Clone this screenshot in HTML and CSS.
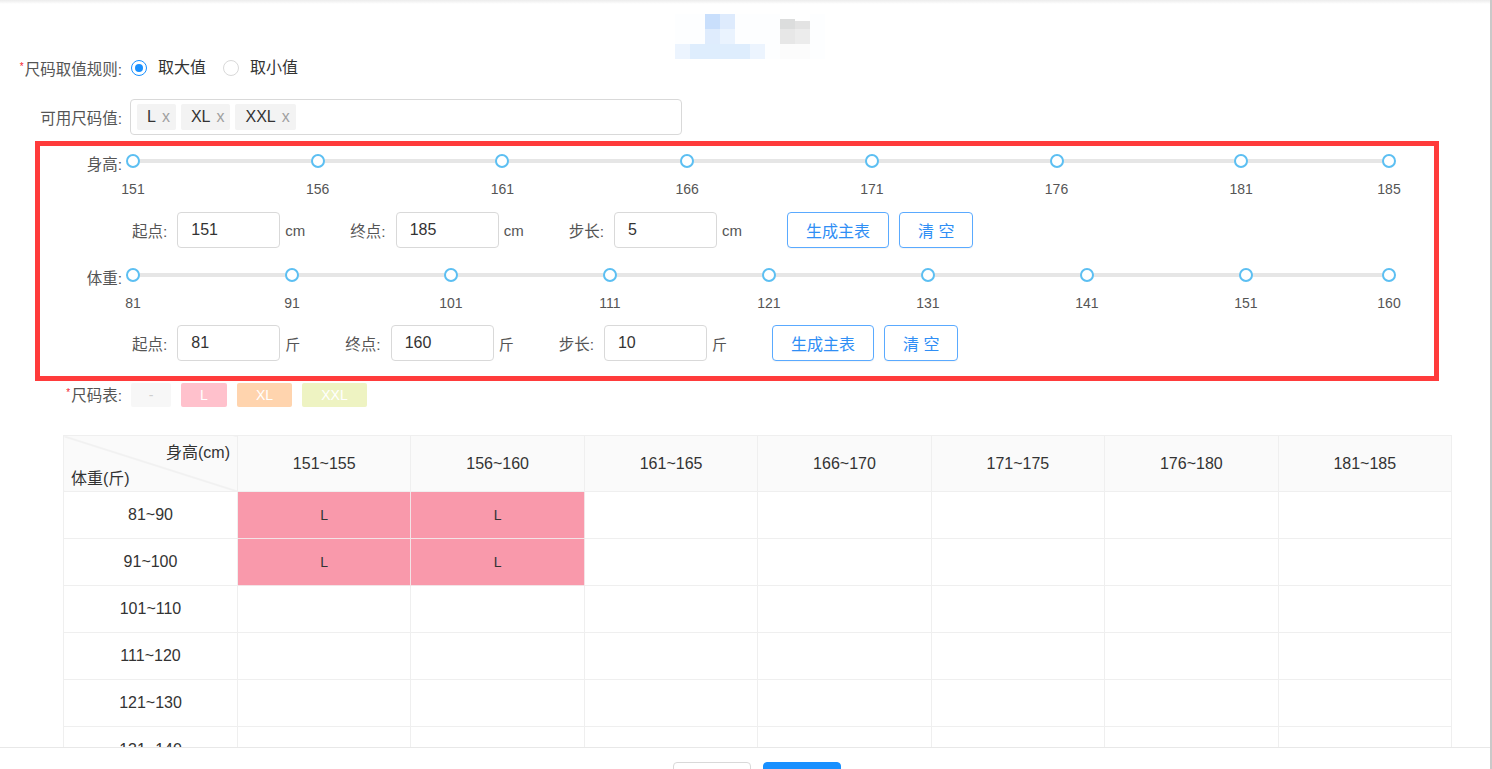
FILE: index.html
```html
<!DOCTYPE html>
<html lang="zh-CN">
<head>
<meta charset="utf-8">
<title>尺码表</title>
<link rel="stylesheet" href="styles.css">
</head>
<body>
<div class="modal">
  <div class="modal-body">
    <div class="shade"></div>
    <div class="title">
      <div class="mosaic">
        <i></i><i></i><i class="b1"></i><i class="b2"></i><i></i><i></i><i></i><i class="g1"></i><i class="g2"></i><i></i>
        <i></i><i></i><i class="b3"></i><i class="b4"></i><i></i><i></i><i></i><i class="g3"></i><i class="g4"></i><i></i>
        <i class="b5"></i><i class="b6"></i><i class="b6"></i><i class="b6"></i><i class="b6"></i><i class="b5"></i><i></i><i class="w"></i><i class="w"></i><i></i>
      </div>
    </div>

    <div class="form-row rule-row">
      <div class="form-label"><span class="req">*</span>尺码取值规则:</div>
      <label class="radio checked"><span class="radio-dot"></span><span class="radio-text">取大值</span></label>
      <label class="radio"><span class="radio-dot"></span><span class="radio-text">取小值</span></label>
    </div>

    <div class="form-row sizes-row">
      <div class="form-label">可用尺码值:</div>
      <div class="select">
        <span class="tag">L<span class="tag-x">x</span></span>
        <span class="tag">XL<span class="tag-x">x</span></span>
        <span class="tag">XXL<span class="tag-x">x</span></span>
      </div>
    </div>

    <div class="range-box">
      <div class="slider-row">
        <div class="slider-label">身高:</div>
        <div class="slider">
          <div class="rail"></div>
          <div class="marks">
            <span class="handle" style="left:0%"></span><span class="mark" style="left:0%">151</span>
            <span class="handle" style="left:14.706%"></span><span class="mark" style="left:14.706%">156</span>
            <span class="handle" style="left:29.412%"></span><span class="mark" style="left:29.412%">161</span>
            <span class="handle" style="left:44.118%"></span><span class="mark" style="left:44.118%">166</span>
            <span class="handle" style="left:58.824%"></span><span class="mark" style="left:58.824%">171</span>
            <span class="handle" style="left:73.529%"></span><span class="mark" style="left:73.529%">176</span>
            <span class="handle" style="left:88.235%"></span><span class="mark" style="left:88.235%">181</span>
            <span class="handle" style="left:100%"></span><span class="mark" style="left:100%">185</span>
          </div>
        </div>
      </div>
      <div class="field-row first-fields">
        <span class="f-label">起点:</span><span class="input">151</span><span class="unit">cm</span>
        <span class="f-label">终点:</span><span class="input">185</span><span class="unit">cm</span>
        <span class="f-label">步长:</span><span class="input">5</span><span class="unit">cm</span>
        <button class="btn">生成主表</button><button class="btn">清 空</button>
      </div>
      <div class="slider-row second-slider">
        <div class="slider-label">体重:</div>
        <div class="slider">
          <div class="rail"></div>
          <div class="marks">
            <span class="handle" style="left:0%"></span><span class="mark" style="left:0%">81</span>
            <span class="handle" style="left:12.658%"></span><span class="mark" style="left:12.658%">91</span>
            <span class="handle" style="left:25.316%"></span><span class="mark" style="left:25.316%">101</span>
            <span class="handle" style="left:37.975%"></span><span class="mark" style="left:37.975%">111</span>
            <span class="handle" style="left:50.633%"></span><span class="mark" style="left:50.633%">121</span>
            <span class="handle" style="left:63.291%"></span><span class="mark" style="left:63.291%">131</span>
            <span class="handle" style="left:75.949%"></span><span class="mark" style="left:75.949%">141</span>
            <span class="handle" style="left:88.608%"></span><span class="mark" style="left:88.608%">151</span>
            <span class="handle" style="left:100%"></span><span class="mark" style="left:100%">160</span>
          </div>
        </div>
      </div>
      <div class="field-row second-fields">
        <span class="f-label">起点:</span><span class="input">81</span><span class="unit">斤</span>
        <span class="f-label">终点:</span><span class="input">160</span><span class="unit">斤</span>
        <span class="f-label">步长:</span><span class="input">10</span><span class="unit">斤</span>
        <button class="btn">生成主表</button><button class="btn">清 空</button>
      </div>
    </div>

    <div class="form-row chips-row">
      <div class="form-label"><span class="req">*</span>尺码表:</div>
      <span class="chip chip-none">-</span>
      <span class="chip chip-l">L</span>
      <span class="chip chip-xl">XL</span>
      <span class="chip chip-xxl">XXL</span>
    </div>

    <table class="size-table">
      <colgroup><col class="c0"><col><col><col><col><col><col><col></colgroup>
      <thead>
        <tr>
          <th class="corner"><span class="corner-top">身高(cm)</span><span class="corner-bottom">体重(斤)</span></th>
          <th>151~155</th><th>156~160</th><th>161~165</th><th>166~170</th><th>171~175</th><th>176~180</th><th>181~185</th>
        </tr>
      </thead>
      <tbody>
        <tr><td class="rh">81~90</td><td class="pink">L</td><td class="pink">L</td><td></td><td></td><td></td><td></td><td></td></tr>
        <tr><td class="rh">91~100</td><td class="pink">L</td><td class="pink">L</td><td></td><td></td><td></td><td></td><td></td></tr>
        <tr><td class="rh">101~110</td><td></td><td></td><td></td><td></td><td></td><td></td><td></td></tr>
        <tr><td class="rh">111~120</td><td></td><td></td><td></td><td></td><td></td><td></td><td></td></tr>
        <tr><td class="rh">121~130</td><td></td><td></td><td></td><td></td><td></td><td></td><td></td></tr>
        <tr><td class="rh">131~140</td><td></td><td></td><td></td><td></td><td></td><td></td><td></td></tr>
      </tbody>
    </table>
  </div>
  <div class="modal-footer">
    <button class="fbtn">取 消</button>
    <button class="fbtn primary">确 定</button>
  </div>
</div>
</body>
</html>
```

FILE: styles.css
```css
html, body {
  margin: 0;
  padding: 0;
  background: #fff;
}
body {
  font-family: "Liberation Sans", "Noto Sans CJK SC", sans-serif;
  color: #333;
}
.modal {
  width: 1492px;
  height: 769px;
  box-sizing: border-box;
  border-right: 2px solid #c9c9c9;
  display: flex;
  flex-direction: column;
  overflow: hidden;
}
.modal-body {
  height: 747px;
  flex: none;
  overflow: hidden;
}
.shade {
  height: 4px;
  background: linear-gradient(#ececec, #fff);
}
.title {
  height: 55px;
  padding-top: 10px;
  box-sizing: border-box;
}
.mosaic {
  margin-left: 675px;
  width: 150px;
  display: grid;
  grid-template-columns: repeat(10, 15px);
  grid-auto-rows: 15px;
}
.mosaic i { display: block; background: #fdfeff; }
.mosaic .b1 { background: #c9dffc; }
.mosaic .b2 { background: #deebfd; }
.mosaic .b3 { background: #dfecfd; }
.mosaic .b4 { background: #eaf3fe; }
.mosaic .b5 { background: #ecf4fe; }
.mosaic .b6 { background: #deedfd; }
.mosaic .g1 { background: linear-gradient(#fff 0 5px, #dcdddd 5px); }
.mosaic .g2 { background: linear-gradient(#fff 0 7px, #e3e3e3 7px); }
.mosaic .g3 { background: #e7e7e7; }
.mosaic .g4 { background: #ececec; }
.mosaic .w { background: #fcfcfc; }

.form-row {
  display: flex;
  align-items: center;
}
.form-label {
  width: 130px;
  flex: none;
  box-sizing: border-box;
  padding-right: 8px;
  text-align: right;
  font-size: 15.5px;
  color: #555;
  white-space: nowrap;
}
.req {
  color: #f5222d;
  font-size: 10px;
  vertical-align: 5px;
  margin-right: 1px;
}
.rule-row { height: 16px; margin-top: 1px; }
.radio {
  display: flex;
  align-items: center;
  margin-left: 1px;
  margin-right: 16px;
  font-size: 16px;
  color: #333;
}
.radio-dot {
  width: 16px;
  height: 16px;
  box-sizing: border-box;
  border: 1px solid #d9d9d9;
  border-radius: 50%;
  position: relative;
  margin-right: 11px;
}
.radio.checked .radio-dot { border-color: #1890ff; }
.radio.checked .radio-dot::after {
  content: "";
  position: absolute;
  left: 3px;
  top: 3px;
  width: 8px;
  height: 8px;
  border-radius: 50%;
  background: #1890ff;
}
.radio-text { line-height: 16px; }

.sizes-row { margin-top: 23px; }
.select {
  width: 552px;
  height: 36px;
  box-sizing: border-box;
  border: 1px solid #d9d9d9;
  border-radius: 4px;
  padding: 4px 6px;
  display: flex;
  gap: 5px;
}
.tag {
  height: 26px;
  line-height: 26px;
  padding: 0 6px 0 10px;
  background: #f3f3f3;
  border-radius: 2px;
  font-size: 16px;
  color: #333;
}
.tag-x {
  margin-left: 6px;
  font-size: 16px;
  color: #a0a0a0;
}

.range-box {
  margin-top: 6px;
  margin-left: 35px;
  width: 1404px;
  height: 240px;
  box-sizing: border-box;
  border: 5px solid #ff3b3b;
  padding-top: 8px;
}
.slider-row {
  display: flex;
  height: 43px;
}
.second-slider { margin-top: 20px; }
.slider-label {
  width: 86px;
  flex: none;
  box-sizing: border-box;
  padding-right: 4px;
  text-align: right;
  font-size: 15.5px;
  line-height: 16px;
  margin-top: 3px;
  color: #555;
  white-space: nowrap;
}
.slider {
  position: relative;
  width: 1270px;
  flex: none;
}
.rail {
  position: absolute;
  left: 7px;
  right: 7px;
  top: 5px;
  height: 4px;
  border-radius: 2px;
  background: #e6e6e6;
}
.marks {
  position: absolute;
  left: 7px;
  right: 7px;
  top: 0;
  bottom: 0;
}
.handle {
  position: absolute;
  top: 0;
  width: 14px;
  height: 14px;
  margin-left: -7px;
  box-sizing: border-box;
  border: 2px solid #5cbff2;
  border-radius: 50%;
  background: #fff;
}
.mark {
  position: absolute;
  top: 27px;
  transform: translateX(-50%);
  font-size: 14px;
  line-height: 16px;
  color: #555;
}

.field-row {
  display: flex;
  align-items: center;
  padding-left: 92px;
  height: 36px;
}
.first-fields { margin-top: 15px; }
.second-fields { margin-top: 14px; }
.f-label {
  font-size: 15.5px;
  color: #555;
  margin-right: 10px;
  white-space: nowrap;
}
.input {
  width: 103px;
  height: 36px;
  box-sizing: border-box;
  border: 1px solid #d9d9d9;
  border-radius: 4px;
  padding: 0 13px;
  line-height: 34px;
  font-size: 16px;
  color: #333;
}
.unit {
  margin-left: 5px;
  margin-right: 45px;
  font-size: 15px;
  color: #555;
}
.btn {
  height: 36px;
  padding: 0 18px;
  border: 1px solid #5aaaff;
  border-radius: 4px;
  background: #fff;
  color: #2f8ef5;
  font-family: "Liberation Sans", "Noto Sans CJK SC", sans-serif;
  font-size: 16px;
  margin-right: 10px;
  box-shadow: 0 1px 1px rgba(0,0,0,0.04);
}

.chips-row {
  margin-top: 2px;
  align-items: flex-start;
}
.chips-row .form-label {
  line-height: 20px;
}
.chip {
  height: 24px;
  line-height: 24px;
  border-radius: 2px;
  margin-left: 1px;
  margin-right: 9px;
  text-align: center;
  font-size: 14px;
  color: #fff;
}
.chip-none { width: 40px; background: #f7f7f7; color: #cfcfcf; }
.chip-l { width: 46px; background: #ffc1cc; }
.chip-xl { width: 55px; background: #ffd4ae; }
.chip-xxl { width: 65px; background: #eef3c2; }

.size-table {
  margin-top: 28px;
  margin-left: 63px;
  width: 1389px;
  table-layout: fixed;
  border-collapse: collapse;
}
.size-table .c0 { width: 174px; }
.size-table th, .size-table td {
  border: 1px solid #efefef;
  text-align: center;
  padding: 0;
  font-size: 16px;
  color: #333;
}
.size-table th {
  height: 55px;
  background: #fafafa;
  font-weight: normal;
}
.size-table td { height: 46px; }
.size-table td.pink {
  background: #f999ab;
  font-size: 14px;
  border-color: #f3e3e6;
}
.corner {
  position: relative;
  background: linear-gradient(to top right, #fafafa calc(50% - 1px), #e9e9e9 50%, #fafafa calc(50% + 1px)) !important;
}
.corner-top {
  position: absolute;
  right: 7px;
  top: 3px;
}
.corner-bottom {
  position: absolute;
  left: 7px;
  bottom: 2px;
}

.modal-footer {
  flex: none;
  border-top: 1px solid #e8e8e8;
  padding-top: 14px;
  padding-left: 24px;
  display: flex;
  justify-content: center;
  gap: 12px;
}
.fbtn {
  width: 78px;
  height: 32px;
  padding: 12px 0 0;
  border: 1px solid #d9d9d9;
  border-radius: 4px;
  background: #fff;
  font-family: "Liberation Sans", "Noto Sans CJK SC", sans-serif;
  font-size: 14px;
  color: #333;
}
.fbtn.primary {
  background: #1890ff;
  border-color: #1890ff;
  color: #fff;
}
```
